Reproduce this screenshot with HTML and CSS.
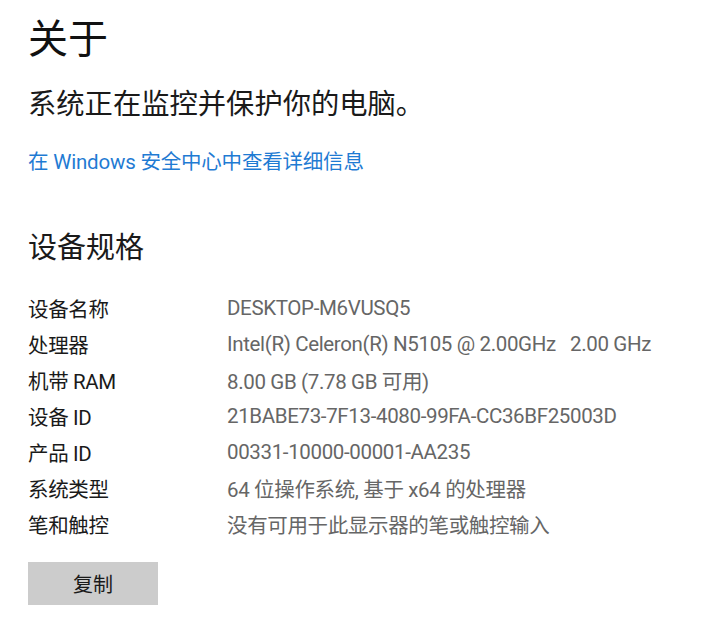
FILE: index.html
```html
<!DOCTYPE html>
<html lang="zh-CN">
<head>
<meta charset="utf-8">
<title>关于</title>
<link rel="stylesheet" href="styles.css">
</head>
<body>
<main class="page">
  <h1 class="title">关于</h1>
  <p class="status">系统正在监控并保护你的电脑。</p>
  <a class="link" href="#">在 Windows 安全中心中查看详细信息</a>
  <h2 class="section">设备规格</h2>
  <dl class="specs">
    <div class="row"><dt>设备名称</dt><dd>DESKTOP-M6VUSQ5</dd></div>
    <div class="row"><dt>处理器</dt><dd>Intel(R) Celeron(R) N5105 @ 2.00GHz&nbsp;&nbsp;&nbsp;2.00 GHz</dd></div>
    <div class="row"><dt>机带 RAM</dt><dd>8.00 GB (7.78 GB 可用)</dd></div>
    <div class="row"><dt>设备 ID</dt><dd>21BABE73-7F13-4080-99FA-CC36BF25003D</dd></div>
    <div class="row"><dt>产品 ID</dt><dd>00331-10000-00001-AA235</dd></div>
    <div class="row"><dt>系统类型</dt><dd>64 位操作系统, 基于 x64 的处理器</dd></div>
    <div class="row"><dt>笔和触控</dt><dd>没有可用于此显示器的笔或触控输入</dd></div>
  </dl>
  <button class="copy" type="button">复制</button>
</main>
</body>
</html>
```

FILE: styles.css
```css
html, body {
  margin: 0;
  padding: 0;
  background: #ffffff;
}

body {
  font-family: "Noto Sans", "Noto Sans CJK SC", sans-serif;
  color: #1a1a1a;
}

.page {
  display: flex;
  flex-direction: column;
  align-items: flex-start;
  padding: 14px 0 0 28px;
}

.title {
  margin: 0;
  font-size: 40px;
  line-height: 48px;
  font-weight: 400;
  color: #111;
}

.status {
  margin: 23px 0 0;
  font-size: 28.3px;
  line-height: 36px;
  color: #1a1a1a;
}

.link {
  margin-top: 27px;
  font-family: Roboto, "Noto Sans CJK SC", sans-serif;
  font-size: 20.5px;
  line-height: 28px;
  letter-spacing: -0.2px;
  color: #1f7bd3;
  text-decoration: none;
}

.section {
  margin: 51px 0 0;
  font-size: 29px;
  line-height: 40px;
  font-weight: 400;
  color: #1a1a1a;
}

.specs {
  margin: 23px 0 0;
  display: flex;
  flex-direction: column;
}

.row {
  display: grid;
  grid-template-columns: 199px auto;
  height: 36px;
  align-items: center;
  font-family: Roboto, "Noto Sans CJK SC", sans-serif;
  font-size: 20.5px;
  letter-spacing: -0.35px;
}

.row dt {
  color: #1a1a1a;
}

.row dd {
  margin: 0;
  color: #666666;
}

.copy {
  margin-top: 20px;
  width: 130px;
  height: 43px;
  border: none;
  background: #cccccc;
  font-family: "Noto Sans CJK SC", sans-serif;
  font-size: 20px;
  color: #1a1a1a;
  padding: 0;
}
```
